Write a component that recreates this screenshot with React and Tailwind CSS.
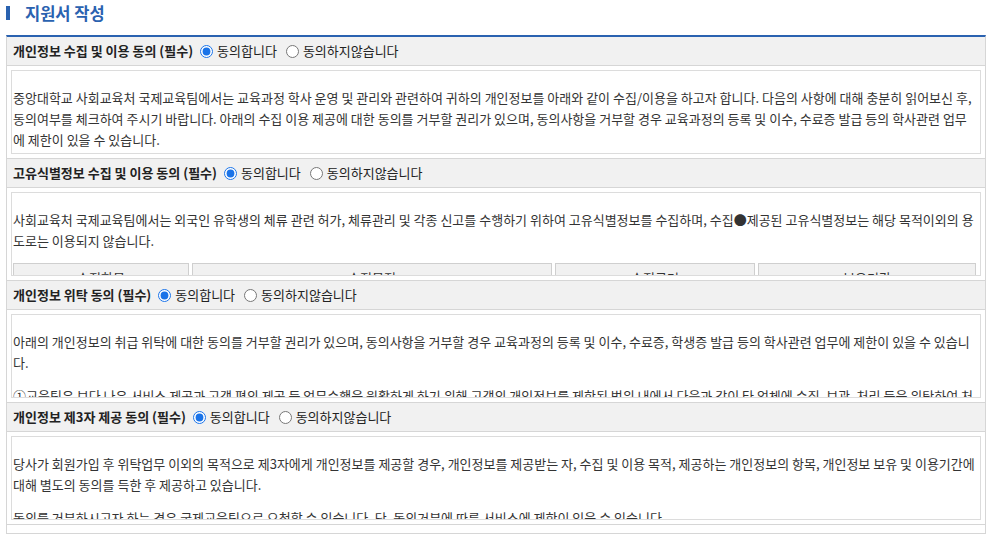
import React, { useState } from 'react';

const font = { fontFamily: '"Noto Sans CJK KR", "Noto Sans", sans-serif' };

const sections = [
  {
    id: 'privacy',
    title: '개인정보 수집 및 이용 동의 (필수)',
    paragraphs: [
      '중앙대학교 사회교육처 국제교육팀에서는 교육과정 학사 운영 및 관리와 관련하여 귀하의 개인정보를 아래와 같이 수집/이용을 하고자 합니다. 다음의 사항에 대해 충분히 읽어보신 후, 동의여부를 체크하여 주시기 바랍니다. 아래의 수집 이용 제공에 대한 동의를 거부할 권리가 있으며, 동의사항을 거부할 경우 교육과정의 등록 및 이수, 수료증 발급 등의 학사관련 업무에 제한이 있을 수 있습니다.',
    ],
  },
  {
    id: 'unique',
    title: '고유식별정보 수집 및 이용 동의 (필수)',
    paragraphs: [
      '사회교육처 국제교육팀에서는 외국인 유학생의 체류 관련 허가, 체류관리 및 각종 신고를 수행하기 위하여 고유식별정보를 수집하며, 수집●제공된 고유식별정보는 해당 목적이외의 용도로는 이용되지 않습니다.',
    ],
    table: true,
  },
  {
    id: 'consign',
    title: '개인정보 위탁 동의 (필수)',
    paragraphs: [
      '아래의 개인정보의 취급 위탁에 대한 동의를 거부할 권리가 있으며, 동의사항을 거부할 경우 교육과정의 등록 및 이수, 수료증, 학생증 발급 등의 학사관련 업무에 제한이 있을 수 있습니다.',
      '①교육팀은 보다 나은 서비스 제공과 고객 편의 제공 등 업무수행을 원활하게 하기 위해 고객의 개인정보를 제한된 범위 내에서 다음과 같이 타 업체에 수집, 보관, 처리 등을 위탁하여 처리하고 있습니다.',
    ],
  },
  {
    id: 'third',
    title: '개인정보 제3자 제공 동의 (필수)',
    paragraphs: [
      '당사가 회원가입 후 위탁업무 이외의 목적으로 제3자에게 개인정보를 제공할 경우, 개인정보를 제공받는 자, 수집 및 이용 목적, 제공하는 개인정보의 항목, 개인정보 보유 및 이용기간에 대해 별도의 동의를 득한 후 제공하고 있습니다.',
      '동의를 거부하시고자 하는 경우 국제교육팀으로 요청할 수 있습니다. 단, 동의거부에 따른 서비스에 제한이 있을 수 있습니다.',
    ],
  },
];

const Section = ({ section, value, onChange }) => (
  <div className="border-b border-[#d6d6d6]">
    <div className="h-[29px] flex items-center px-[6px] bg-[#f1f1f1] border-b border-[#d6d6d6] text-[13px] text-[#222]">
      <span className="font-bold">{section.title}</span>
      <label className="flex items-center ml-[7px]">
        <input
          type="radio"
          name={section.id}
          checked={value === 'Y'}
          onChange={() => onChange('Y')}
          className="w-[13px] h-[13px] m-0 mr-[4px] accent-[#1a73e8]"
        />
        동의합니다
      </label>
      <label className="flex items-center ml-[9px]">
        <input
          type="radio"
          name={section.id}
          checked={value === 'N'}
          onChange={() => onChange('N')}
          className="w-[13px] h-[13px] m-0 mr-[4px] accent-[#1a73e8]"
        />
        동의하지않습니다
      </label>
    </div>
    <div className="p-[4px] bg-white">
      <div className="h-[84px] overflow-hidden border border-[#dcdcdc] pl-[1px] pr-[4px] pt-[16px] text-[13px] leading-[21px] text-[#333]">
        {section.paragraphs.map((p, i) => (
          <p key={i} className="mb-[12px]">{p}</p>
        ))}
        {section.table && (
          <div className="grid grid-cols-[176px_360px_200px_1fr] gap-[3px] mt-[3px]">
            {['수집항목', '수집목적', '수집근거', '보유기간'].map((h) => (
              <div key={h} className="bg-[#f1f1f1] border border-[#cfcfcf] h-[24px] text-center leading-[28px]">
                {h}
              </div>
            ))}
          </div>
        )}
      </div>
    </div>
  </div>
);

export default function App() {
  const [values, setValues] = useState({ privacy: 'Y', unique: 'Y', consign: 'Y', third: 'Y' });

  return (
    <div className="w-[1000px] h-[546px] bg-white overflow-hidden" style={font}>
      <div className="pl-[6px] pr-[14px]">
        <div className="flex items-center h-[25px] pt-[1px]">
          <span className="w-[4px] h-[14px] bg-[#2a62b0] mr-[15px]" />
          <h2 className="text-[16.5px] font-bold text-[#2a62b0]">지원서 작성</h2>
        </div>
        <div className="mt-[10px] border-t-2 border-[#2a62b0] border-x border-x-[#d6d6d6] border-b border-b-[#d6d6d6]">
          {sections.map((s) => (
            <Section
              key={s.id}
              section={s}
              value={values[s.id]}
              onChange={(v) => setValues({ ...values, [s.id]: v })}
            />
          ))}
          <div className="h-[8px]" />
        </div>
      </div>
    </div>
  );
}
